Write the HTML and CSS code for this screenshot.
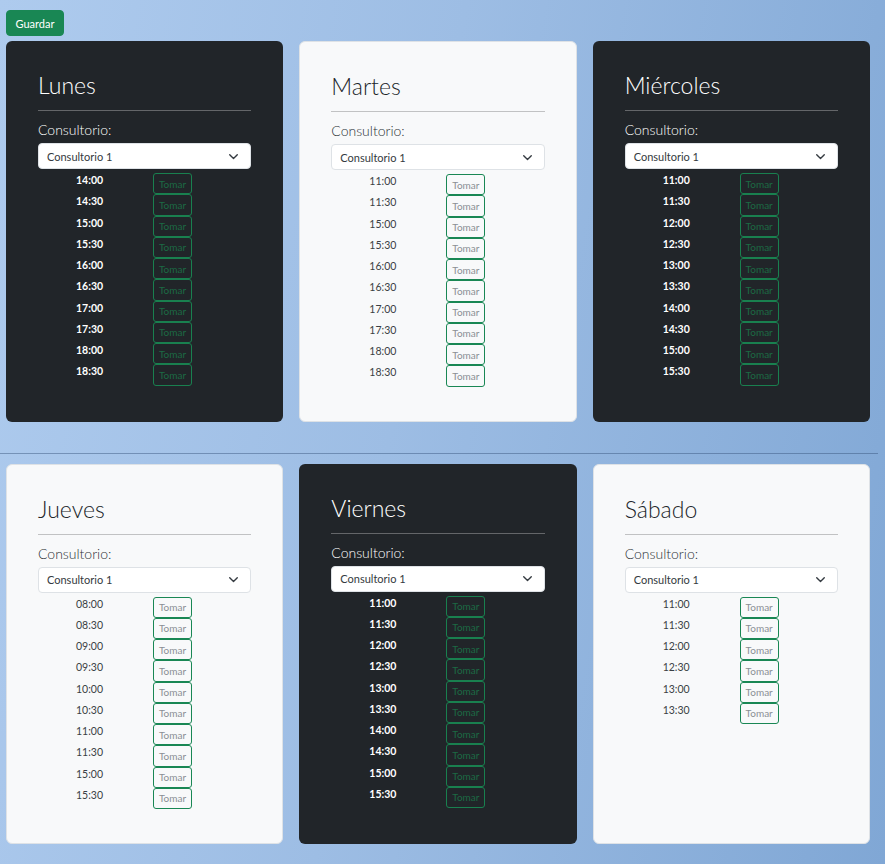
FILE: index.html
```html
<!DOCTYPE html>
<html lang="es">
<head>
<meta charset="utf-8">
<title>Horarios</title>
<link rel="stylesheet" href="styles.css">
</head>
<body>
<div class="toolbar"><button class="btn-save">Guardar</button></div>

<div class="week">
  <section class="card dark">
    <h3 class="day">Lunes</h3>
    <hr class="rule">
    <label class="lbl">Consultorio:</label>
    <div class="select"><span>Consultorio 1</span><svg class="chev" viewBox="0 0 16 16"><polyline points="2.5,5.5 8,11 13.5,5.5"/></svg></div>
    <div class="slots">
      <div class="slot"><span class="time">14:00</span><button class="take">Tomar</button></div>
      <div class="slot"><span class="time">14:30</span><button class="take">Tomar</button></div>
      <div class="slot"><span class="time">15:00</span><button class="take">Tomar</button></div>
      <div class="slot"><span class="time">15:30</span><button class="take">Tomar</button></div>
      <div class="slot"><span class="time">16:00</span><button class="take">Tomar</button></div>
      <div class="slot"><span class="time">16:30</span><button class="take">Tomar</button></div>
      <div class="slot"><span class="time">17:00</span><button class="take">Tomar</button></div>
      <div class="slot"><span class="time">17:30</span><button class="take">Tomar</button></div>
      <div class="slot"><span class="time">18:00</span><button class="take">Tomar</button></div>
      <div class="slot"><span class="time">18:30</span><button class="take">Tomar</button></div>
    </div>
  </section>

  <section class="card light">
    <h3 class="day">Martes</h3>
    <hr class="rule">
    <label class="lbl">Consultorio:</label>
    <div class="select"><span>Consultorio 1</span><svg class="chev" viewBox="0 0 16 16"><polyline points="2.5,5.5 8,11 13.5,5.5"/></svg></div>
    <div class="slots">
      <div class="slot"><span class="time">11:00</span><button class="take">Tomar</button></div>
      <div class="slot"><span class="time">11:30</span><button class="take">Tomar</button></div>
      <div class="slot"><span class="time">15:00</span><button class="take">Tomar</button></div>
      <div class="slot"><span class="time">15:30</span><button class="take">Tomar</button></div>
      <div class="slot"><span class="time">16:00</span><button class="take">Tomar</button></div>
      <div class="slot"><span class="time">16:30</span><button class="take">Tomar</button></div>
      <div class="slot"><span class="time">17:00</span><button class="take">Tomar</button></div>
      <div class="slot"><span class="time">17:30</span><button class="take">Tomar</button></div>
      <div class="slot"><span class="time">18:00</span><button class="take">Tomar</button></div>
      <div class="slot"><span class="time">18:30</span><button class="take">Tomar</button></div>
    </div>
  </section>

  <section class="card dark">
    <h3 class="day">Miércoles</h3>
    <hr class="rule">
    <label class="lbl">Consultorio:</label>
    <div class="select"><span>Consultorio 1</span><svg class="chev" viewBox="0 0 16 16"><polyline points="2.5,5.5 8,11 13.5,5.5"/></svg></div>
    <div class="slots">
      <div class="slot"><span class="time">11:00</span><button class="take">Tomar</button></div>
      <div class="slot"><span class="time">11:30</span><button class="take">Tomar</button></div>
      <div class="slot"><span class="time">12:00</span><button class="take">Tomar</button></div>
      <div class="slot"><span class="time">12:30</span><button class="take">Tomar</button></div>
      <div class="slot"><span class="time">13:00</span><button class="take">Tomar</button></div>
      <div class="slot"><span class="time">13:30</span><button class="take">Tomar</button></div>
      <div class="slot"><span class="time">14:00</span><button class="take">Tomar</button></div>
      <div class="slot"><span class="time">14:30</span><button class="take">Tomar</button></div>
      <div class="slot"><span class="time">15:00</span><button class="take">Tomar</button></div>
      <div class="slot"><span class="time">15:30</span><button class="take">Tomar</button></div>
    </div>
  </section>
</div>

<hr class="divider">

<div class="week">
  <section class="card light">
    <h3 class="day">Jueves</h3>
    <hr class="rule">
    <label class="lbl">Consultorio:</label>
    <div class="select"><span>Consultorio 1</span><svg class="chev" viewBox="0 0 16 16"><polyline points="2.5,5.5 8,11 13.5,5.5"/></svg></div>
    <div class="slots">
      <div class="slot"><span class="time">08:00</span><button class="take">Tomar</button></div>
      <div class="slot"><span class="time">08:30</span><button class="take">Tomar</button></div>
      <div class="slot"><span class="time">09:00</span><button class="take">Tomar</button></div>
      <div class="slot"><span class="time">09:30</span><button class="take">Tomar</button></div>
      <div class="slot"><span class="time">10:00</span><button class="take">Tomar</button></div>
      <div class="slot"><span class="time">10:30</span><button class="take">Tomar</button></div>
      <div class="slot"><span class="time">11:00</span><button class="take">Tomar</button></div>
      <div class="slot"><span class="time">11:30</span><button class="take">Tomar</button></div>
      <div class="slot"><span class="time">15:00</span><button class="take">Tomar</button></div>
      <div class="slot"><span class="time">15:30</span><button class="take">Tomar</button></div>
    </div>
  </section>

  <section class="card dark">
    <h3 class="day">Viernes</h3>
    <hr class="rule">
    <label class="lbl">Consultorio:</label>
    <div class="select"><span>Consultorio 1</span><svg class="chev" viewBox="0 0 16 16"><polyline points="2.5,5.5 8,11 13.5,5.5"/></svg></div>
    <div class="slots">
      <div class="slot"><span class="time">11:00</span><button class="take">Tomar</button></div>
      <div class="slot"><span class="time">11:30</span><button class="take">Tomar</button></div>
      <div class="slot"><span class="time">12:00</span><button class="take">Tomar</button></div>
      <div class="slot"><span class="time">12:30</span><button class="take">Tomar</button></div>
      <div class="slot"><span class="time">13:00</span><button class="take">Tomar</button></div>
      <div class="slot"><span class="time">13:30</span><button class="take">Tomar</button></div>
      <div class="slot"><span class="time">14:00</span><button class="take">Tomar</button></div>
      <div class="slot"><span class="time">14:30</span><button class="take">Tomar</button></div>
      <div class="slot"><span class="time">15:00</span><button class="take">Tomar</button></div>
      <div class="slot"><span class="time">15:30</span><button class="take">Tomar</button></div>
    </div>
  </section>

  <section class="card light">
    <h3 class="day">Sábado</h3>
    <hr class="rule">
    <label class="lbl">Consultorio:</label>
    <div class="select"><span>Consultorio 1</span><svg class="chev" viewBox="0 0 16 16"><polyline points="2.5,5.5 8,11 13.5,5.5"/></svg></div>
    <div class="slots">
      <div class="slot"><span class="time">11:00</span><button class="take">Tomar</button></div>
      <div class="slot"><span class="time">11:30</span><button class="take">Tomar</button></div>
      <div class="slot"><span class="time">12:00</span><button class="take">Tomar</button></div>
      <div class="slot"><span class="time">12:30</span><button class="take">Tomar</button></div>
      <div class="slot"><span class="time">13:00</span><button class="take">Tomar</button></div>
      <div class="slot"><span class="time">13:30</span><button class="take">Tomar</button></div>
    </div>
  </section>
</div>
</body>
</html>
```

FILE: styles.css
```css
* { box-sizing: border-box; }

html, body { height: 100%; }

body {
  margin: 0;
  font-family: Lato, "Open Sans", Arial, sans-serif;
  background: linear-gradient(100deg, #aecbee 0%, #9dbde4 45%, #80a7d5 100%);
  background-attachment: fixed;
  color: #212529;
}

.toolbar {
  padding: 10px 6px 5px;
}

.btn-save {
  font-family: inherit;
  font-size: 11px;
  color: #fff;
  background: #198754;
  border: 1px solid #198754;
  border-radius: 4px;
  height: 26px;
  width: 58px;
  padding: 0;
}

.week {
  display: grid;
  grid-template-columns: repeat(3, 1fr);
  column-gap: 16px;
  width: 864px;
  margin-left: 6px;
}

.card {
  border-radius: 6px;
  padding: 30px 32px 35px;
}

.card.dark {
  background: #212529;
  color: #fff;
}

.card.light {
  background: #f8f9fa;
  border: 1px solid #dee2e6;
  padding: 30px 31px 34px;
  color: #212529;
}

.day {
  margin: 0;
  font-size: 23px;
  font-weight: 300;
  line-height: 28px;
}

.rule {
  border: 0;
  border-top: 1px solid rgba(255, 255, 255, 0.3);
  margin: 11px 0 10px;
}

.light .rule {
  border-top-color: rgba(0, 0, 0, 0.22);
}

.lbl {
  display: block;
  font-size: 14px;
  font-weight: 300;
  line-height: 18px;
  margin-bottom: 4px;
}

.light .lbl { color: #2b3035; }

.select {
  display: flex;
  align-items: center;
  justify-content: space-between;
  height: 26px;
  background: #fff;
  border: 1px solid #dee2e6;
  border-radius: 4px;
  padding: 0 11px 0 8px;
  font-size: 11px;
  color: #343a40;
}

.chev {
  width: 11px;
  height: 11px;
  fill: none;
  stroke: #343a40;
  stroke-width: 2;
  stroke-linecap: round;
  stroke-linejoin: round;
}

.slots {
  padding-top: 4px;
}

.slot {
  display: flex;
  align-items: flex-start;
  height: 21.25px;
}

.time {
  width: 115px;
  padding-left: 38px;
  font-size: 10.5px;
  line-height: 14px;
}

.dark .time { font-weight: 700; }

.light .time { color: #3a3f44; }

.take {
  font-family: inherit;
  font-size: 10px;
  width: 39px;
  height: 21.25px;
  padding: 0;
  background: transparent;
  border: 1px solid #198754;
  border-radius: 3px;
  color: #8a8f94;
}

.dark .take {
  color: #1c6a44;
  border-color: #19804f;
}

.divider {
  border: 0;
  border-top: 1px solid rgba(50, 80, 120, 0.45);
  margin: 31px 7px 10px 0;
}
```
